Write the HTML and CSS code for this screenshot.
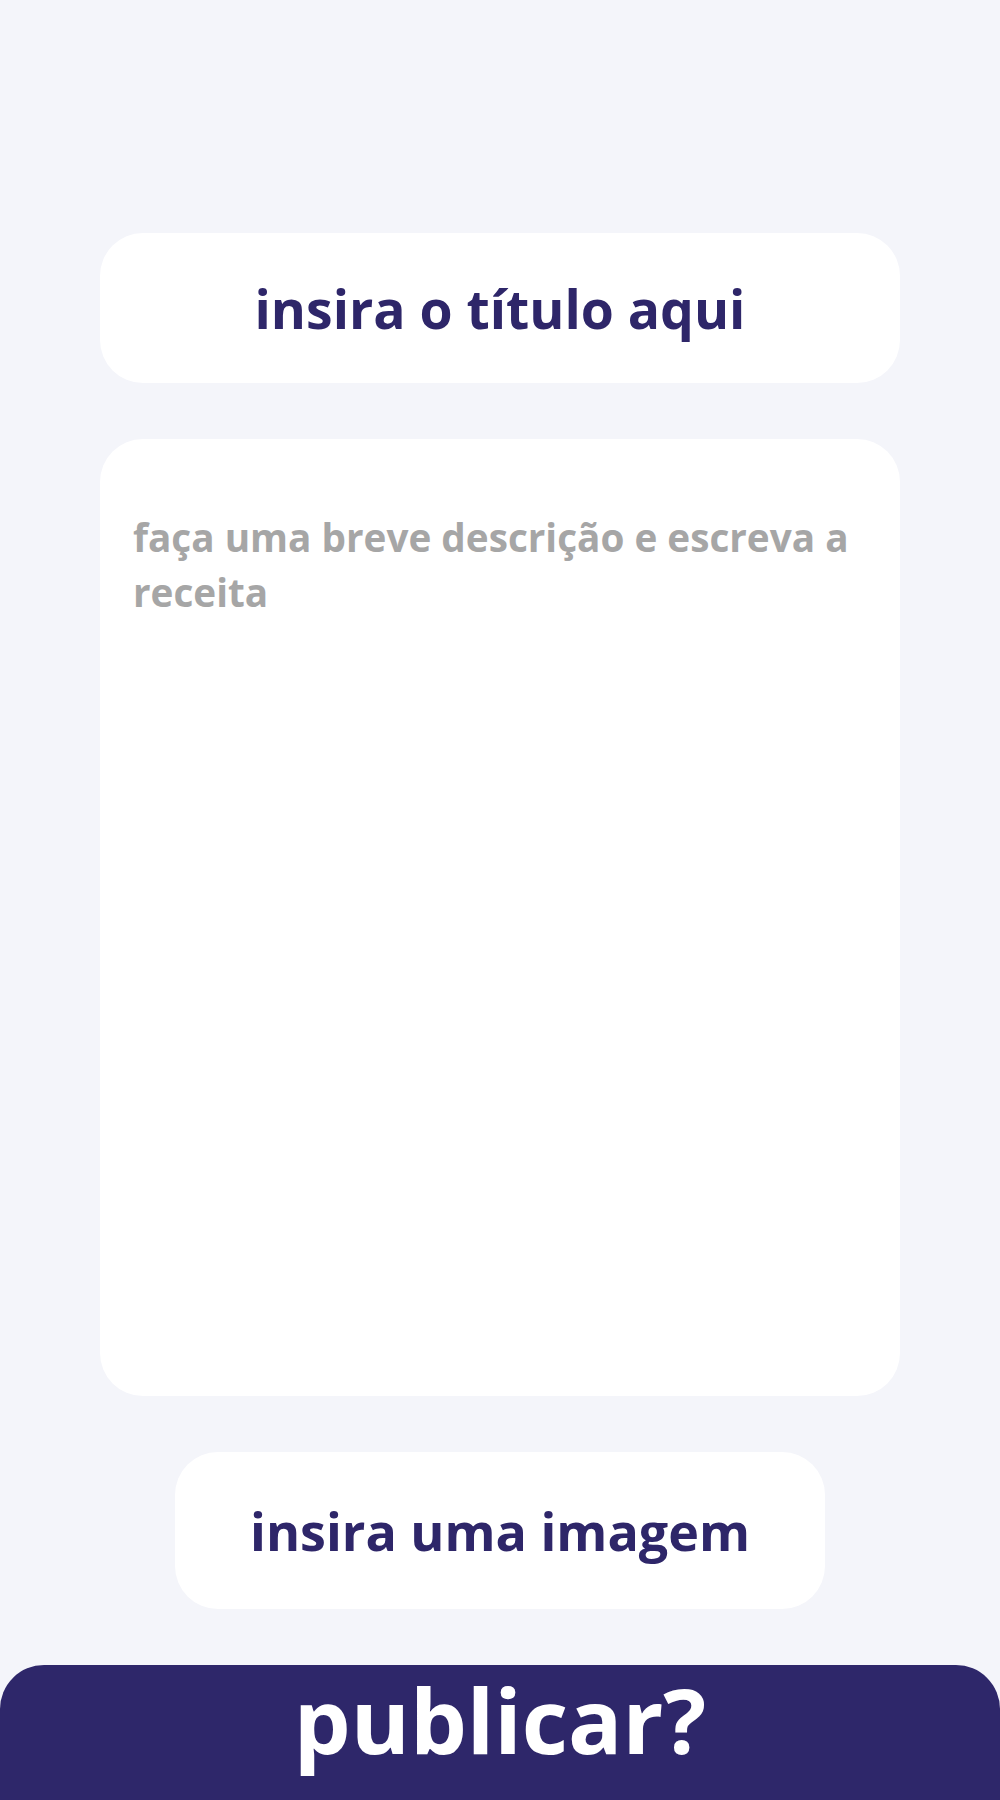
FILE: index.html
```html
<!DOCTYPE html>
<html lang="pt">
<head>
<meta charset="utf-8">
<title>Nova receita</title>
<link rel="stylesheet" href="styles.css">
</head>
<body>
<main class="page">
  <div class="field title-field">insira o título aqui</div>
  <div class="field desc-field"><p class="placeholder">faça uma breve descrição e escreva a receita</p></div>
  <div class="field image-field">insira uma imagem</div>
  <div class="publish">publicar?</div>
</main>
</body>
</html>
```
FILE: styles.css
```css
html, body {
  margin: 0;
  padding: 0;
  background: #f4f5fa;
}
body {
  font-family: "Open Sans", "DejaVu Sans", sans-serif;
  font-weight: 700;
}
.page {
  display: flex;
  flex-direction: column;
  align-items: center;
  padding-top: 233px;
  height: 1800px;
  box-sizing: border-box;
  overflow: hidden;
}
.field {
  background: #ffffff;
  border-radius: 43px;
  box-sizing: border-box;
}
.title-field {
  width: 800px;
  height: 150px;
  display: flex;
  align-items: center;
  justify-content: center;
  color: #2e2669;
  font-size: 53.5px;
}
.desc-field {
  width: 800px;
  height: 957px;
  margin-top: 56px;
  padding: 71px 34px 0 33px;
}
.placeholder {
  margin: 0;
  color: #a6a6a6;
  font-size: 38.7px;
  line-height: 55px;
}
.image-field {
  width: 650px;
  height: 157px;
  margin-top: 56px;
  display: flex;
  align-items: center;
  justify-content: center;
  color: #2e2669;
  font-size: 52px;
}
.publish {
  width: 1000px;
  height: 135px;
  margin-top: 56px;
  background: #2e276a;
  border-radius: 44px 44px 0 0;
  color: #ffffff;
  font-size: 90px;
  line-height: 90px;
  padding-top: 9px;
  box-sizing: border-box;
  text-align: center;
}
```
